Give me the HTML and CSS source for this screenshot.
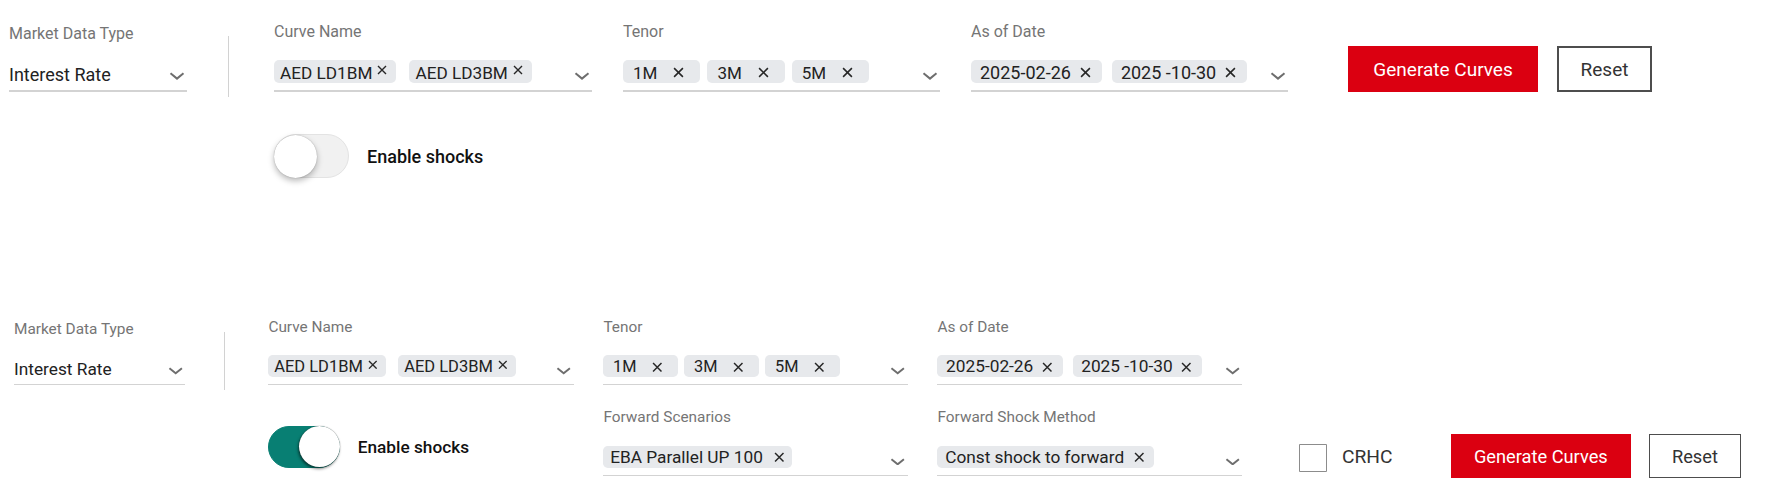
FILE: index.html
```html
<!DOCTYPE html>
<html lang="en">
<head>
<meta charset="utf-8">
<title>Curve generator</title>
<link rel="stylesheet" href="styles.css">
</head>
<body>
<main class="page">

  <section class="panel panel--basic">
    <div class="field">
      <div class="field__label field__label--type">Market Data Type</div>
      <div class="field__control">
        <span class="field__value">Interest Rate</span>
        <svg class="chevron" viewBox="0 0 16 8"><path d="M1.5 1.2 L8 6.6 L14.5 1.2"/></svg>
      </div>
    </div>
    <div class="divider"></div>
    <div class="field">
      <div class="field__label">Curve Name</div>
      <div class="field__control field__control--curve">
        <span class="chip chip--curve"><span>AED LD1BM</span><svg class="chip__x chip__x--raised" viewBox="0 0 10 10"><path d="M1 1 L9 9 M9 1 L1 9"/></svg></span>
        <span class="chip chip--curve"><span>AED LD3BM</span><svg class="chip__x chip__x--raised" viewBox="0 0 10 10"><path d="M1 1 L9 9 M9 1 L1 9"/></svg></span>
        <svg class="chevron" viewBox="0 0 16 8"><path d="M1.5 1.2 L8 6.6 L14.5 1.2"/></svg>
      </div>
    </div>
    <div class="field">
      <div class="field__label">Tenor</div>
      <div class="field__control field__control--tenor">
        <span class="chip chip--tenor"><span>1M</span><svg class="chip__x" viewBox="0 0 10 10"><path d="M1 1 L9 9 M9 1 L1 9"/></svg></span>
        <span class="chip chip--tenor"><span>3M</span><svg class="chip__x" viewBox="0 0 10 10"><path d="M1 1 L9 9 M9 1 L1 9"/></svg></span>
        <span class="chip chip--tenor"><span>5M</span><svg class="chip__x" viewBox="0 0 10 10"><path d="M1 1 L9 9 M9 1 L1 9"/></svg></span>
        <svg class="chevron" viewBox="0 0 16 8"><path d="M1.5 1.2 L8 6.6 L14.5 1.2"/></svg>
      </div>
    </div>
    <div class="field">
      <div class="field__label">As of Date</div>
      <div class="field__control field__control--date">
        <span class="chip chip--date"><span>2025-02-26</span><svg class="chip__x" viewBox="0 0 10 10"><path d="M1 1 L9 9 M9 1 L1 9"/></svg></span>
        <span class="chip chip--date"><span>2025 -10-30</span><svg class="chip__x" viewBox="0 0 10 10"><path d="M1 1 L9 9 M9 1 L1 9"/></svg></span>
        <svg class="chevron" viewBox="0 0 16 8"><path d="M1.5 1.2 L8 6.6 L14.5 1.2"/></svg>
      </div>
    </div>
    <div class="actions actions--row1">
      <button class="btn btn--primary" type="button">Generate Curves</button>
      <button class="btn btn--secondary" type="button">Reset</button>
    </div>
    <div class="shock-toggle">
      <span class="toggle"><span class="toggle__knob"></span></span>
      <span class="shock-toggle__label">Enable shocks</span>
    </div>
  </section>

  <section class="panel panel--shocks">
    <div class="field">
      <div class="field__label field__label--type">Market Data Type</div>
      <div class="field__control">
        <span class="field__value">Interest Rate</span>
        <svg class="chevron" viewBox="0 0 16 8"><path d="M1.5 1.2 L8 6.6 L14.5 1.2"/></svg>
      </div>
    </div>
    <div class="divider"></div>
    <div class="field">
      <div class="field__label">Curve Name</div>
      <div class="field__control field__control--curve">
        <span class="chip chip--curve"><span>AED LD1BM</span><svg class="chip__x chip__x--raised" viewBox="0 0 10 10"><path d="M1 1 L9 9 M9 1 L1 9"/></svg></span>
        <span class="chip chip--curve"><span>AED LD3BM</span><svg class="chip__x chip__x--raised" viewBox="0 0 10 10"><path d="M1 1 L9 9 M9 1 L1 9"/></svg></span>
        <svg class="chevron" viewBox="0 0 16 8"><path d="M1.5 1.2 L8 6.6 L14.5 1.2"/></svg>
      </div>
    </div>
    <div class="field">
      <div class="field__label">Tenor</div>
      <div class="field__control field__control--tenor">
        <span class="chip chip--tenor"><span>1M</span><svg class="chip__x" viewBox="0 0 10 10"><path d="M1 1 L9 9 M9 1 L1 9"/></svg></span>
        <span class="chip chip--tenor"><span>3M</span><svg class="chip__x" viewBox="0 0 10 10"><path d="M1 1 L9 9 M9 1 L1 9"/></svg></span>
        <span class="chip chip--tenor"><span>5M</span><svg class="chip__x" viewBox="0 0 10 10"><path d="M1 1 L9 9 M9 1 L1 9"/></svg></span>
        <svg class="chevron" viewBox="0 0 16 8"><path d="M1.5 1.2 L8 6.6 L14.5 1.2"/></svg>
      </div>
    </div>
    <div class="field">
      <div class="field__label">As of Date</div>
      <div class="field__control field__control--date">
        <span class="chip chip--date"><span>2025-02-26</span><svg class="chip__x" viewBox="0 0 10 10"><path d="M1 1 L9 9 M9 1 L1 9"/></svg></span>
        <span class="chip chip--date"><span>2025 -10-30</span><svg class="chip__x" viewBox="0 0 10 10"><path d="M1 1 L9 9 M9 1 L1 9"/></svg></span>
        <svg class="chevron" viewBox="0 0 16 8"><path d="M1.5 1.2 L8 6.6 L14.5 1.2"/></svg>
      </div>
    </div>

    <div class="shock-toggle">
      <span class="toggle toggle--on"><span class="toggle__knob"></span></span>
      <span class="shock-toggle__label">Enable shocks</span>
    </div>
    <div class="field field--scenarios">
      <div class="field__label">Forward Scenarios</div>
      <div class="field__control">
        <span class="chip chip--scenario"><span>EBA Parallel UP 100</span><svg class="chip__x" viewBox="0 0 10 10"><path d="M1 1 L9 9 M9 1 L1 9"/></svg></span>
        <svg class="chevron" viewBox="0 0 16 8"><path d="M1.5 1.2 L8 6.6 L14.5 1.2"/></svg>
      </div>
    </div>
    <div class="field field--method">
      <div class="field__label">Forward Shock Method</div>
      <div class="field__control">
        <span class="chip chip--method"><span>Const shock to forward</span><svg class="chip__x" viewBox="0 0 10 10"><path d="M1 1 L9 9 M9 1 L1 9"/></svg></span>
        <svg class="chevron" viewBox="0 0 16 8"><path d="M1.5 1.2 L8 6.6 L14.5 1.2"/></svg>
      </div>
    </div>
    <div class="actions actions--row2">
      <label class="check">
        <span class="check__box"></span>
        <span class="check__text">CRHC</span>
      </label>
      <button class="btn btn--primary btn--compact" type="button">Generate Curves</button>
      <button class="btn btn--secondary" type="button">Reset</button>
    </div>
  </section>

</main>
</body>
</html>
```

FILE: styles.css
```css
* { box-sizing: border-box; }

html, body {
  margin: 0;
  background: #ffffff;
}

body {
  font-family: Roboto, "Noto Sans", "Liberation Sans", sans-serif;
  color: #212121;
}

.panel {
  display: grid;
  grid-template-columns: 178px 25px 318px 317px 317px auto;
  column-gap: 31px;
  row-gap: 24px;
  align-items: start;
  align-content: start;
  padding: 21.5px 0 0 9px;
}

.panel--basic {
  height: 297px;
}

.panel--shocks {
  zoom: 0.96;
  padding-left: 14.6px;
}

/* ---------- fields ---------- */
.field__label {
  font-size: 16px;
  line-height: 19px;
  color: #757575;
  margin-bottom: 19.5px;
  white-space: nowrap;
}

.field__label--type {
  padding-top: 2.6px;
  margin-bottom: 16.9px;
}

.field__control {
  display: flex;
  align-items: center;
  height: 32px;
  padding-bottom: 7px;
  border-bottom: 2px solid #d3d3d3;
}

.field__control--curve { gap: 13px; }
.field__control--tenor { gap: 7px; }
.field__control--date { gap: 10px; }

.field__value {
  align-self: flex-end;
  margin-bottom: -1px;
  font-size: 18px;
  line-height: 18px;
  color: #222222;
  white-space: nowrap;
}

.chevron {
  flex: 0 0 auto;
  width: 16px;
  height: 8px;
  margin-left: auto;
  margin-right: 2px;
  align-self: flex-end;
  margin-bottom: 3px;
  fill: none;
  stroke: #6e6e6e;
  stroke-width: 2;
}

.divider {
  grid-column: 2;
  grid-row: 1;
  width: 1px;
  height: 61px;
  margin: 14.5px 0 -5px 10px;
  background: #d2d2d2;
}

/* ---------- chips ---------- */
.chip {
  display: inline-flex;
  align-items: center;
  flex: 0 0 auto;
  height: 23px;
  padding-top: 2px;
  border-radius: 5px;
  background: #e7e9ec;
  font-size: 18px;
  line-height: 18px;
  color: #222222;
  white-space: nowrap;
}

.chip__x {
  flex: 0 0 auto;
  width: 11px;
  height: 11px;
  fill: none;
  stroke: #262626;
  stroke-width: 1.4;
}

.chip__x--raised {
  width: 10px;
  height: 10px;
  margin-top: -5px;
}

.chip--curve { padding-left: 6px; padding-right: 9px; gap: 5px; font-size: 17.2px; }
.chip--tenor { padding-left: 10px; padding-right: 16px; gap: 16px; font-size: 17px; }
.chip--date { padding-left: 9px; padding-right: 11px; gap: 9px; }
.chip--scenario { padding-left: 7px; padding-right: 7px; gap: 12px; }
.chip--method { padding-left: 8px; padding-right: 10px; gap: 10px; }

/* ---------- second row ---------- */
.shock-toggle {
  grid-column: 3;
  grid-row: 2;
  display: flex;
  align-items: center;
  gap: 18px;
  padding-top: 18px;
}

.field--scenarios { grid-column: 4; grid-row: 2; }
.field--method { grid-column: 5; grid-row: 2; }

.toggle {
  display: flex;
  align-items: center;
  width: 75px;
  height: 44px;
  border-radius: 22px;
  background: #f1f1f1;
  border: 1px solid #e3e3e3;
}

.toggle__knob {
  width: 43px;
  height: 43px;
  margin-left: -1px;
  border-radius: 50%;
  background: #ffffff;
  box-shadow: 0 3px 6px rgba(0, 0, 0, 0.28), 0 0 1px rgba(0, 0, 0, 0.35);
}

.toggle--on {
  justify-content: flex-end;
  background: #087f73;
  border-color: #087f73;
}

.toggle--on .toggle__knob {
  margin-left: 0;
  margin-right: -1px;
  box-shadow: -1px 2px 3px rgba(0, 0, 0, 0.5), 0 0 1px rgba(0, 0, 0, 0.6);
}

.shock-toggle__label {
  font-size: 18px;
  font-weight: 500;
  color: #111111;
  white-space: nowrap;
}

/* ---------- actions ---------- */
.actions {
  grid-column: 6;
  display: flex;
  align-items: center;
  gap: 19px;
  margin-left: 29px;
}

.actions--row1 {
  grid-row: 1;
  align-self: end;
}

.actions--row2 {
  grid-row: 2;
  margin-top: 27px;
}

.btn {
  height: 46px;
  padding: 0;
  border-radius: 0;
  font-family: Roboto, "Noto Sans", "Liberation Sans", sans-serif;
  font-size: 19px;
  cursor: pointer;
}

.btn--primary {
  width: 190px;
  background: #db0011;
  color: #ffffff;
  border: none;
}

.btn--compact { width: 188px; }

.btn--secondary {
  width: 95px;
  background: #ffffff;
  color: #333333;
  border: 2px solid #4d4d4d;
}

.check {
  display: flex;
  align-items: center;
  gap: 15.5px;
  margin-right: 41.5px;
}

.check__box {
  width: 29px;
  height: 29px;
  margin-top: 3px;
  border: 2px solid #8c8c8c;
  border-radius: 1px;
  background: #ffffff;
}

.check__text {
  font-size: 20px;
  color: #333333;
}
```
